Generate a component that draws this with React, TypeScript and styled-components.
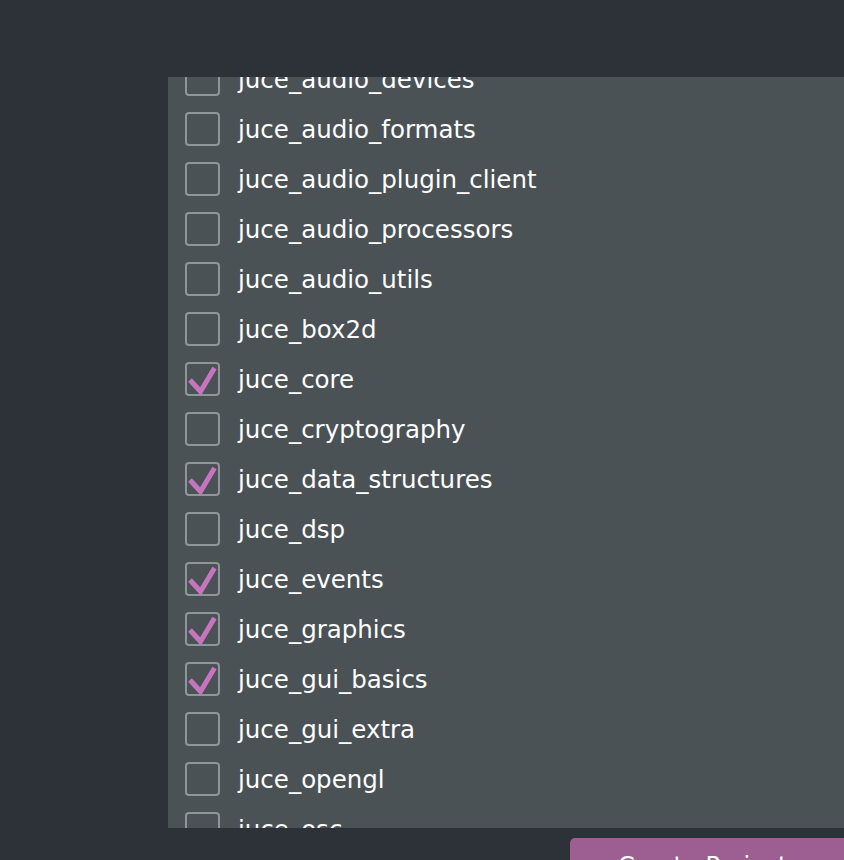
import React, { useLayoutEffect, useRef, useState } from "react";
import styled, { createGlobalStyle } from "styled-components";

const modules = [
  "juce_analytics",
  "juce_audio_basics",
  "juce_audio_devices",
  "juce_audio_formats",
  "juce_audio_plugin_client",
  "juce_audio_processors",
  "juce_audio_utils",
  "juce_box2d",
  "juce_core",
  "juce_cryptography",
  "juce_data_structures",
  "juce_dsp",
  "juce_events",
  "juce_graphics",
  "juce_gui_basics",
  "juce_gui_extra",
  "juce_opengl",
  "juce_osc",
  "juce_product_unlocking",
  "juce_video",
];

const initiallyChecked = [
  "juce_core",
  "juce_data_structures",
  "juce_events",
  "juce_graphics",
  "juce_gui_basics",
];

function App() {
  const [checked, setChecked] = useState<string[]>(initiallyChecked);
  const listRef = useRef<HTMLDivElement>(null);

  useLayoutEffect(() => {
    if (listRef.current) listRef.current.scrollTop = 131;
  }, []);

  const toggle = (name: string) =>
    setChecked((prev) =>
      prev.includes(name) ? prev.filter((n) => n !== name) : [...prev, name]
    );

  return (
    <>
      <GlobalStyle />
      <Page>
        <ModulePanel ref={listRef}>
          <ModuleList>
            {modules.map((name) => {
              const on = checked.includes(name);
              return (
                <ModuleRow key={name} onClick={() => toggle(name)}>
                  <Box>
                    {on && (
                      <svg width="35" height="34" viewBox="0 0 35 34">
                        <polyline
                          points="5,18 15.5,29.5 29.5,6"
                          fill="none"
                          stroke="#c675bf"
                          strokeWidth="5"
                          strokeLinejoin="miter"
                        />
                      </svg>
                    )}
                  </Box>
                  <Label>{name}</Label>
                </ModuleRow>
              );
            })}
          </ModuleList>
        </ModulePanel>
        <Footer>
          <CreateButton>Create Project</CreateButton>
        </Footer>
      </Page>
    </>
  );
}

//@ styled ////////////////////////////////////////
const GlobalStyle = createGlobalStyle`
  html, body {
    margin: 0;
    padding: 0;
    background: #2c3238;
    overflow: hidden;
    height: 860px;
  }
  body {
    font-family: "DejaVu Sans", Verdana, sans-serif;
  }
`;

const Page = styled.div`
  padding: 77px 0 0 168px;
  display: flex;
  flex-direction: column;
  width: 900px;
`;

const ModulePanel = styled.div`
  width: 732px;
  height: 751px;
  background: #4b5256;
  overflow: hidden;
`;

const ModuleList = styled.div`
  display: flex;
  flex-direction: column;
  padding: 8px 0 8px 17px;
`;

const ModuleRow = styled.div`
  display: flex;
  align-items: center;
  gap: 18px;
  height: 50px;
  cursor: pointer;
`;

const Box = styled.div`
  box-sizing: border-box;
  width: 35px;
  height: 34px;
  border: 2px solid #8f9598;
  border-radius: 4px;
  position: relative;
  flex-shrink: 0;

  & svg {
    position: absolute;
    left: -2px;
    top: -2px;
  }
`;

const Label = styled.span`
  font-size: 24.5px;
  line-height: 28px;
  color: #ffffff;
  padding-top: 2px;
  white-space: nowrap;
`;

const Footer = styled.div`
  display: flex;
  padding: 10px 0 0 402px;
`;

const CreateButton = styled.button`
  width: 320px;
  height: 60px;
  border: none;
  border-radius: 5px;
  background: #9d5f92;
  color: #ffffff;
  font-family: "DejaVu Sans", Verdana, sans-serif;
  font-size: 24px;
  line-height: 28px;
  text-align: left;
  padding: 14px 0 0 48px;
  display: flex;
  align-items: flex-start;
`;

export default App;
